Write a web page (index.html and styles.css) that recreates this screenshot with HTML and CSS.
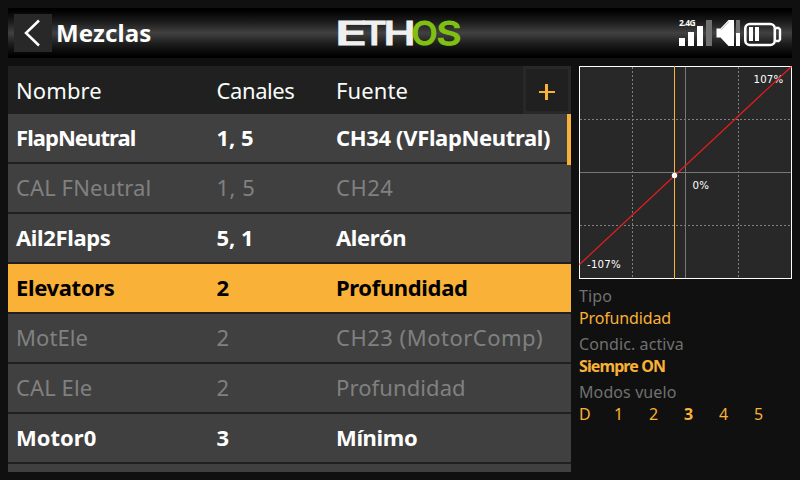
FILE: index.html
```html
<!DOCTYPE html>
<html lang="es">
<head>
<meta charset="utf-8">
<title>Mezclas</title>
<link rel="stylesheet" href="styles.css">
</head>
<body>
<header class="topbar">
  <button class="back" aria-label="Atrás"><svg width="38" height="38"><path d="M25 6.500 12 19 25 31.500" fill="none" stroke="#fff" stroke-width="2.500"/></svg></button>
  <h1 class="title">Mezclas</h1>
  <svg class="logo" width="126" height="50"><text y="37.2"><tspan x="-3" textLength="32" lengthAdjust="spacingAndGlyphs">E</tspan><tspan x="23.800" textLength="25" lengthAdjust="spacingAndGlyphs">T</tspan><tspan x="45.500" textLength="32" lengthAdjust="spacingAndGlyphs">H</tspan><tspan class="green" x="73.5" textLength="26" lengthAdjust="spacingAndGlyphs">O</tspan><tspan class="green" x="98.5" textLength="25" lengthAdjust="spacingAndGlyphs">S</tspan></text></svg>
  <svg class="status" width="114" height="50">
    <text class="band" x="1" y="18">2.4G</text>
    <path fill="#fff" d="M1 30h6v8H1zM10 24h6v14h-6zM19 18h6v20h-6z"/>
    <path fill="#707070" d="M28 12h6v26h-6zM58 12h4v13h-4z"/>
    <path fill="#fff" d="M38.500 20.500h4l8-8.500H56v26h-5.500l-8-8.500h-4zM58 25h4v13h-4z"/>
    <path fill="none" stroke="#999" stroke-width=".7" d="M43.500 21.500 51 13.500"/>
    <rect x="67.3" y="16" width="29.500" height="21" rx="4.500" fill="none" stroke="#fff" stroke-width="2.600"/>
    <path d="M98 20h2.500l1.500 1.500v10l-1.500 1.500H98" fill="none" stroke="#fff" stroke-width="2.400"/>
    <path fill="#fff" d="M71 19h4v14h-4zM77 19h4v14h-4z"/>
  </svg>
</header>
<main class="main">
  <section class="table">
    <div class="row head"><span>Nombre</span><span class="tight">Canales</span><span>Fuente</span><button class="add" aria-label="Añadir"><svg width="16" height="16"><path d="M0 7h16v2H0zM6 0h3v16H6z"/></svg></button></div>
    <div class="rows">
      <div class="row on"><span class="tighter">FlapNeutral</span><span class="wide">1, 5</span><span>CH34 (VFlapNeutral)</span></div>
      <div class="row"><span>CAL FNeutral</span><span class="wide">1, 5</span><span class="wide">CH24</span></div>
      <div class="row on"><span>Ail2Flaps</span><span class="wide">5, 1</span><span>Alerón</span></div>
      <div class="row on selected"><span>Elevators</span><span>2</span><span>Profundidad</span></div>
      <div class="row"><span>MotEle</span><span>2</span><span class="wide">CH23 (MotorComp)</span></div>
      <div class="row"><span>CAL Ele</span><span>2</span><span>Profundidad</span></div>
      <div class="row on"><span class="wide">Motor0</span><span>3</span><span>Mínimo</span></div>
      <div class="row"></div>
      <i class="scrollbar"></i>
    </div>
  </section>
  <aside class="side">
    <svg class="chart" width="213" height="213">
      <rect x=".5" y=".5" width="212" height="212" fill="#282828" stroke="#fff"/>
      <path d="M1 53.5h211M1 159.5h211M53.5 1v211M159.5 1v211" stroke="#808080" stroke-dasharray="2 2" fill="none"/>
      <path d="M1 106.5h211M106.5 1v211" stroke="#777" fill="none"/>
      <text x="174.500" y="17">107%</text>
      <text x="113.500" y="123">0%</text>
      <text x="8" y="202">-107%</text>
      <path d="M95.5 0v213" stroke="#f9b137"/>
      <path d="M.5 198.500 212.500 .5" stroke="#ec1c1c" stroke-width="1.200"/>
      <circle cx="95.5" cy="109.500" r="2.700" fill="#fff"/>
    </svg>
    <dl class="info">
      <dt>Tipo</dt><dd>Profundidad</dd>
      <dt>Condic. activa</dt><dd class="bold condition">Siempre ON</dd>
      <dt>Modos vuelo</dt><dd class="modes"><span>D</span><span>1</span><span>2</span><span class="bold">3</span><span>4</span><span>5</span></dd>
    </dl>
  </aside>
</main>
</body>
</html>
```
FILE: styles.css
```css
* { box-sizing: border-box; margin: 0; }
body {
  width: 800px; height: 480px; padding: 8px; overflow: hidden;
  background: #101010; color: #fff;
  font-family: "Noto Sans", "Open Sans", sans-serif;
  display: flex; flex-direction: column; gap: 8px;
}
button { border: 0; padding: 0; display: grid; place-items: center; }
svg { display: block; }
.topbar {
  height: 50px; display: flex; align-items: center; padding-left: 6px;
  background: linear-gradient(#000 4%, #1c1c1c 28%, #414141 50%, #1c1c1c 72%, #000 96%);
}
.back { width: 38px; height: 38px; background: #282828; }
.title { width: 286px; padding-left: 4px; font-size: 24px; line-height: 50px; font-weight: 700; letter-spacing: .15px; }
.logo { font: 500 33px Inter, sans-serif; fill: #f0f0f0; stroke: #f0f0f0; stroke-width: 1.2px; overflow: visible; }
.green { fill: #80c010; stroke: #80c010; }
.status { margin-left: 214px; }
.band { font: 700 8.5px "Noto Sans", sans-serif; letter-spacing: -.5px; fill: #fff; }
.main { display: flex; gap: 8px; height: 406px; }
.table { width: 563px; overflow: hidden; background: #202020; }
.rows { position: relative; display: grid; gap: 2px; }
.row {
  height: 48px; padding-left: 8px; display: grid; grid-template-columns: 200.5px 119.5px 187px 48px;
  background: #404040; color: #808080; font-size: 22px; line-height: 46px; letter-spacing: .1px; white-space: nowrap;
}
.wide { letter-spacing: .5px; }
.head { background: #202020; color: #f8fcf8; line-height: 48px; }
.tight { letter-spacing: -.4px; }
.on { color: #fff; font-weight: 700; letter-spacing: -.35px; }
.on .wide { letter-spacing: 0; }
.tighter { letter-spacing: -.95px; }
.selected { background: #f9b137; color: #000; }
.add { width: 48px; height: 48px; background: #202020; border: 3px solid #282828; fill: #f9b137; padding-top: 4px; }
.scrollbar { position: absolute; right: 0; top: 0; width: 4px; height: 51px; background: #f9b137; }
.side { width: 213px; }
.chart { font: 10.2px "DejaVu Sans", sans-serif; letter-spacing: .2px; fill: #fff; }
.info { padding-top: 5px; font-size: 16px; letter-spacing: .1px; }
.info dt { height: 26px; line-height: 25px; color: #707070; }
.info dd { height: 22px; line-height: 17px; color: #f9b137; letter-spacing: -.15px; }
.bold { font-weight: 700; }
.info .condition { letter-spacing: -.9px; }
.info .modes { display: grid; grid-template-columns: repeat(6, 35px); letter-spacing: 0; }
```
